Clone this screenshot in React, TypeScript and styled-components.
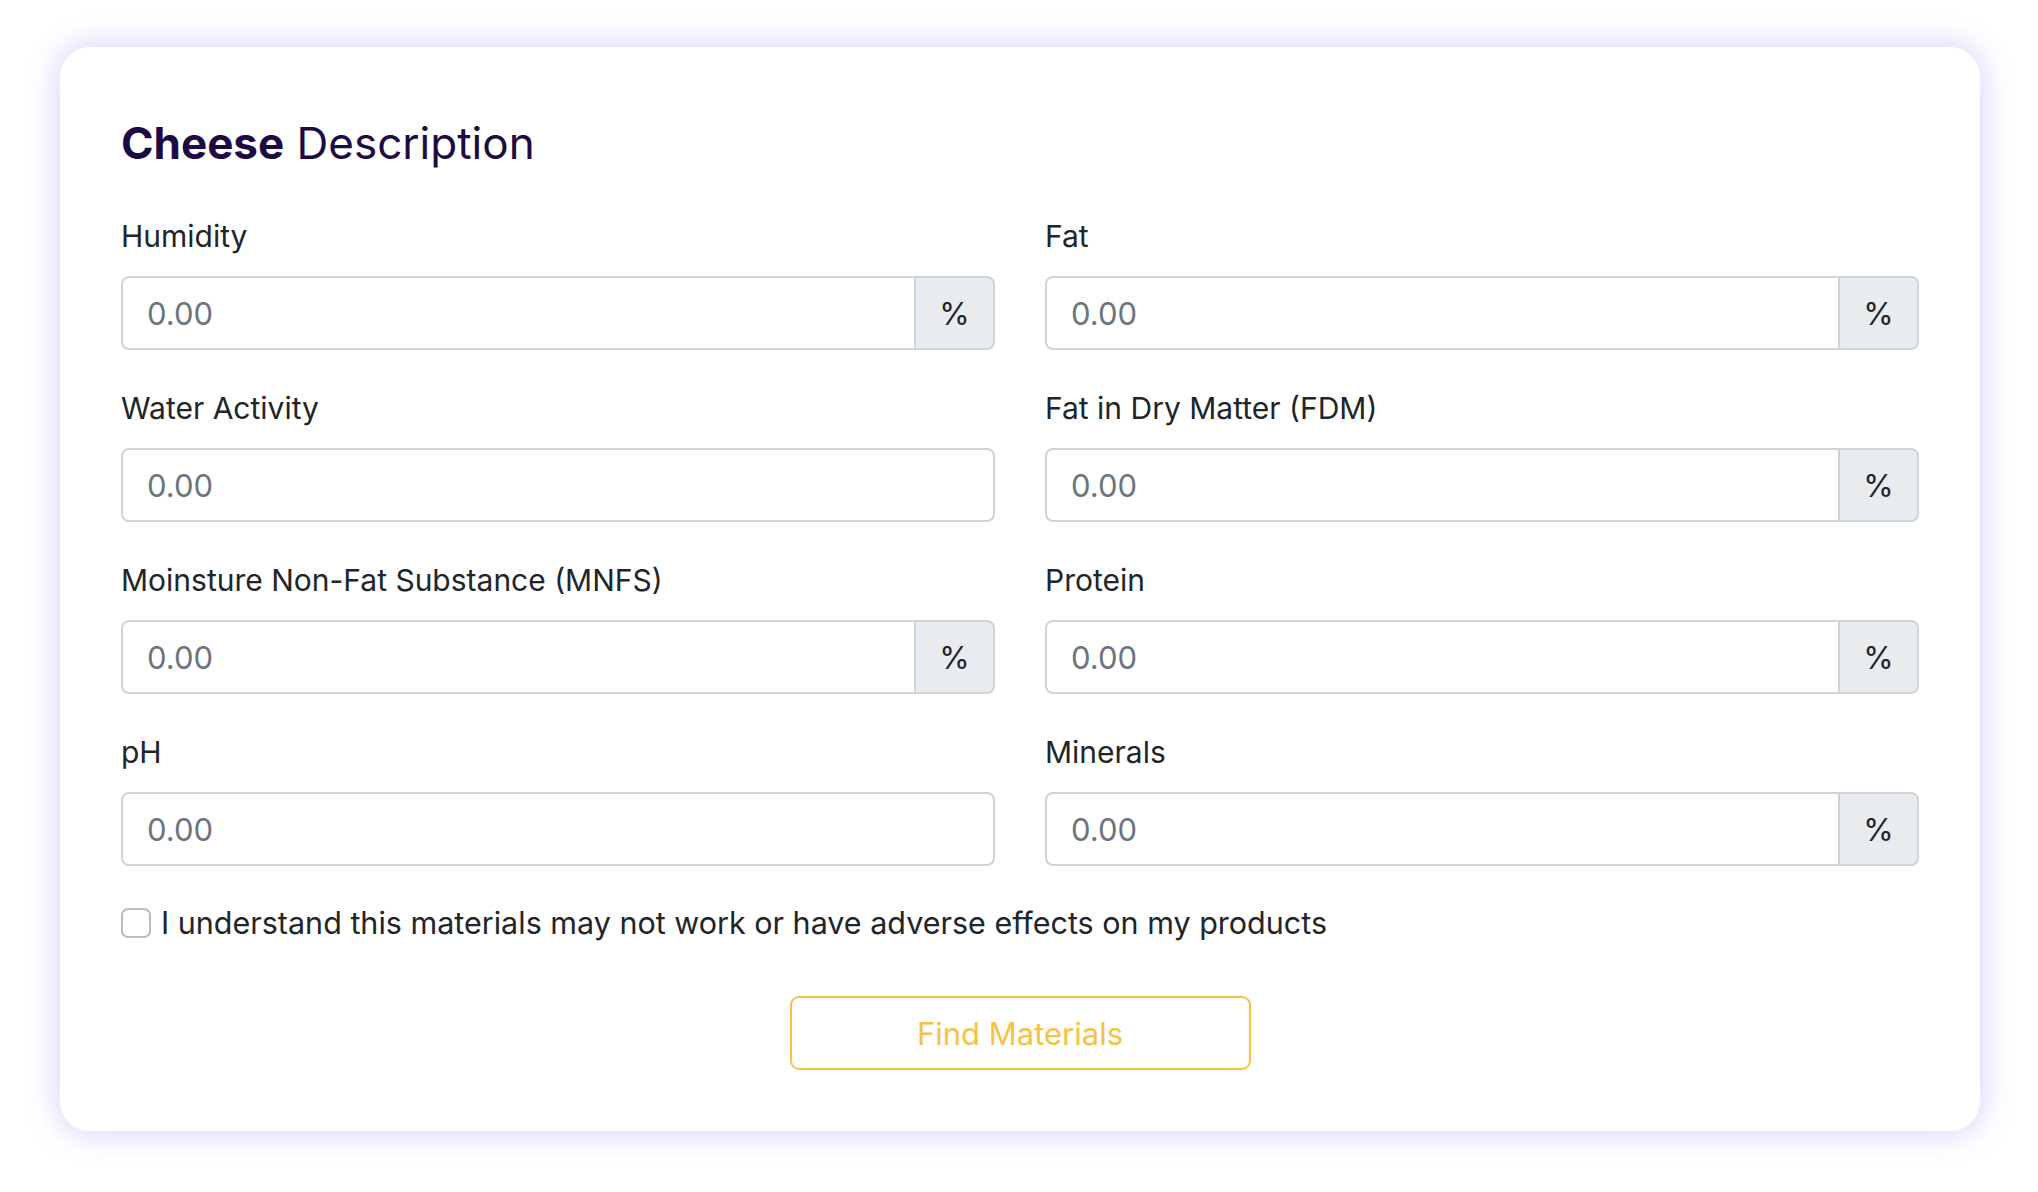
import React from 'react';
import styled, { createGlobalStyle } from 'styled-components';

const GlobalStyle = createGlobalStyle`
  html, body {
    margin: 0;
    padding: 0;
    background: #ffffff;
  }
  body {
    font-family: Inter, "Noto Sans", sans-serif;
    color: #212529;
  }
`;

const Page = styled.div`
  padding: 47px 58px 60px 60px;
`;

const Card = styled.form`
  width: 1920px;
  box-sizing: border-box;
  padding: 61px;
  background: #ffffff;
  border-radius: 30px;
  box-shadow: 0 0 30px 4px rgba(135, 100, 235, 0.28);
`;

const Title = styled.h2`
  margin: 0 0 36px;
  font-size: 44px;
  line-height: 70px;
  font-weight: 400;
  color: #1d0a45;

  strong {
    font-weight: 700;
  }
`;

const FieldGrid = styled.div`
  display: grid;
  grid-template-columns: 1fr 1fr;
  column-gap: 50px;
  row-gap: 36px;
`;

const Field = styled.div`
  display: flex;
  flex-direction: column;
`;

const Label = styled.label`
  font-size: 30px;
  line-height: 45px;
  margin-bottom: 17px;
  color: #212529;
`;

const InputGroup = styled.div`
  display: flex;
  height: 74px;
`;

const Input = styled.input<{ $hasAddon: boolean }>`
  flex: 1;
  min-width: 0;
  box-sizing: border-box;
  height: 74px;
  padding: 0 24px;
  font-family: inherit;
  font-size: 31px;
  color: #212529;
  background: #ffffff;
  border: 2px solid #ced4da;
  border-radius: ${({ $hasAddon }) => ($hasAddon ? '8px 0 0 8px' : '8px')};
  outline: none;

  &::placeholder {
    color: #6c757d;
  }
`;

const Addon = styled.span`
  display: flex;
  align-items: center;
  justify-content: center;
  width: 79px;
  box-sizing: border-box;
  font-size: 31px;
  color: #212529;
  background: #e9ecef;
  border: 2px solid #ced4da;
  border-left: none;
  border-radius: 0 8px 8px 0;
`;

const CheckRow = styled.label`
  display: flex;
  align-items: center;
  gap: 10px;
  margin-top: 34px;
  font-size: 30.5px;
  line-height: 45px;
  color: #212529;
`;

const CheckBox = styled.input`
  appearance: none;
  margin: 0;
  width: 30px;
  height: 30px;
  border: 2px solid #bcbcbc;
  border-radius: 7px;
  background: #ffffff;
`;

const Actions = styled.div`
  display: flex;
  justify-content: center;
  margin-top: 51px;
`;

const FindButton = styled.button`
  width: 461px;
  height: 74px;
  font-family: inherit;
  font-size: 31px;
  color: #f5c243;
  background: #ffffff;
  border: 2px solid #f5c243;
  border-radius: 9px;
  cursor: pointer;
`;

interface IField {
  label: string;
  percent: boolean;
}

const fields: IField[] = [
  { label: 'Humidity', percent: true },
  { label: 'Fat', percent: true },
  { label: 'Water Activity', percent: false },
  { label: 'Fat in Dry Matter (FDM)', percent: true },
  { label: 'Moinsture Non-Fat Substance (MNFS)', percent: true },
  { label: 'Protein', percent: true },
  { label: 'pH', percent: false },
  { label: 'Minerals', percent: true }
];

const App = () => {
  return (
    <Page>
      <GlobalStyle />
      <Card onSubmit={e => e.preventDefault()}>
        <Title>
          <strong>Cheese</strong> Description
        </Title>
        <FieldGrid>
          {fields.map(({ label, percent }) => (
            <Field key={label}>
              <Label>{label}</Label>
              <InputGroup>
                <Input type="text" placeholder="0.00" $hasAddon={percent} />
                {percent && <Addon>%</Addon>}
              </InputGroup>
            </Field>
          ))}
        </FieldGrid>
        <CheckRow>
          <CheckBox type="checkbox" />
          I understand this materials may not work or have adverse effects on my products
        </CheckRow>
        <Actions>
          <FindButton type="submit">Find Materials</FindButton>
        </Actions>
      </Card>
    </Page>
  );
};

export default App;
